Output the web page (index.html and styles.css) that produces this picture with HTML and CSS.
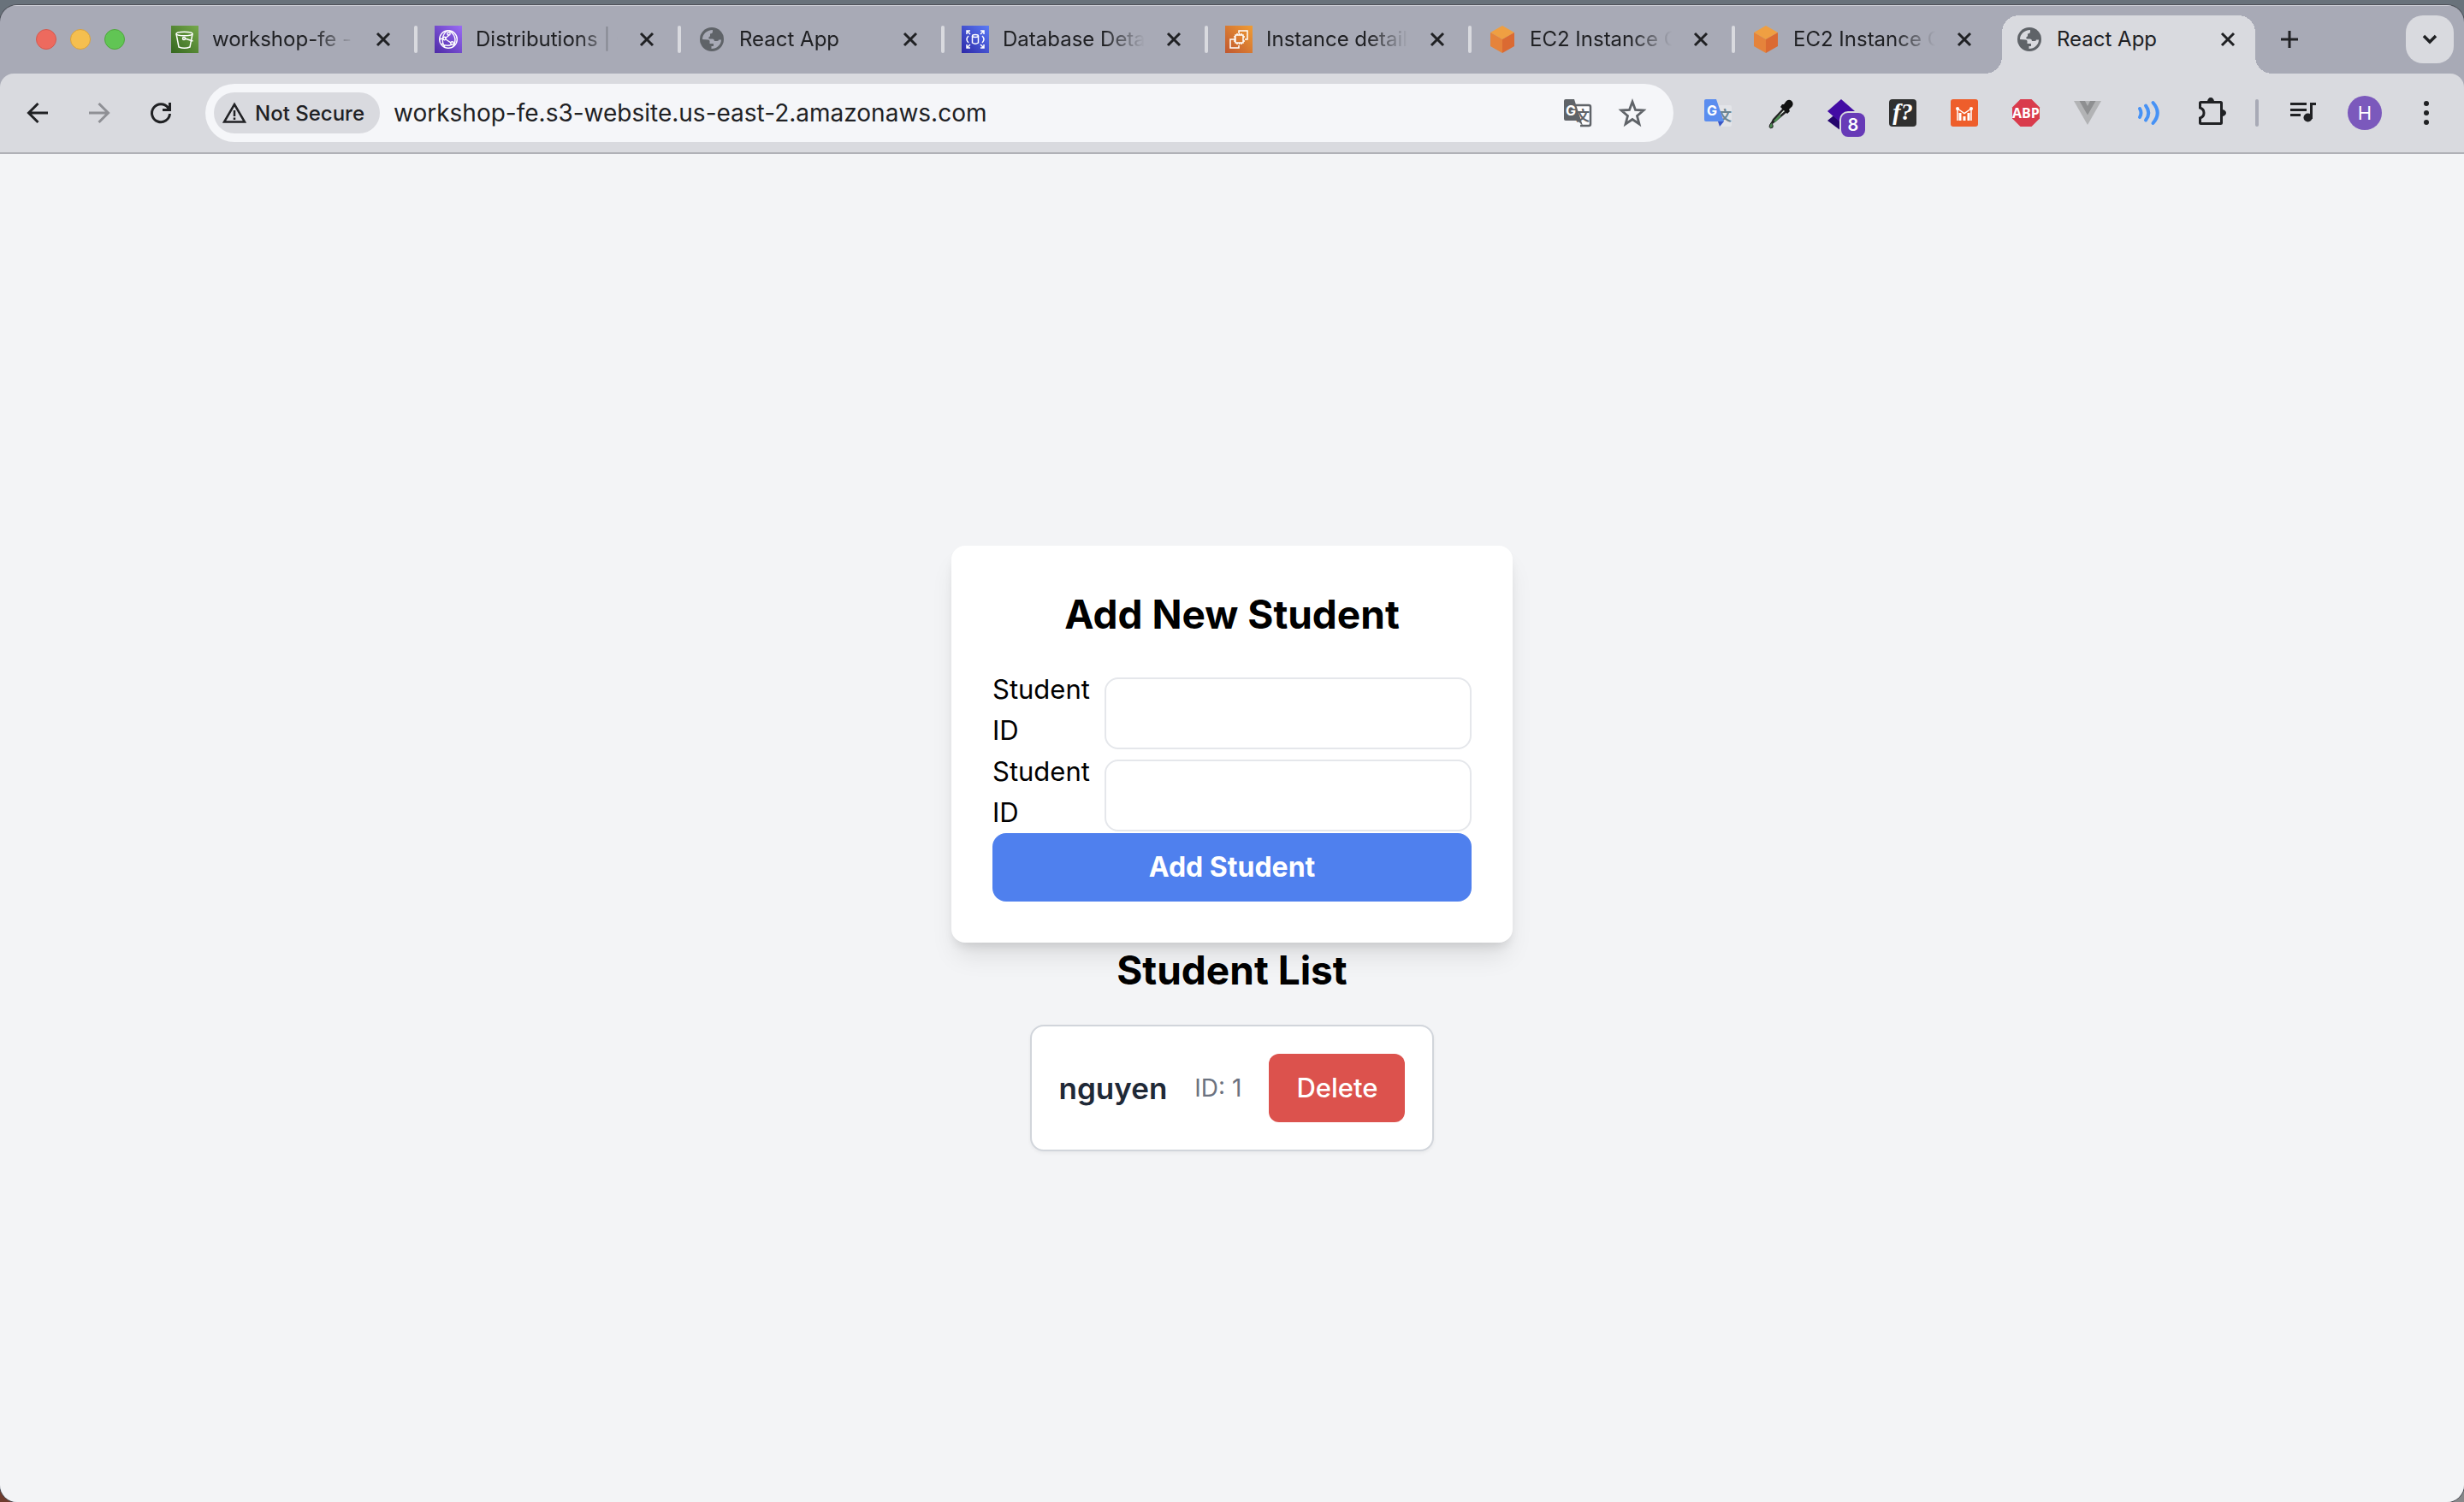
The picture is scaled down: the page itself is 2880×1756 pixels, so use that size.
FILE: index.html
```html
<!DOCTYPE html>
<html lang="en">
<head>
<meta charset="utf-8">
<meta name="viewport" content="width=device-width, initial-scale=1">
<title>React App</title>
<link rel="stylesheet" href="styles.css">
</head>
<body>
<svg class="defs" aria-hidden="true">
  <defs>
    <linearGradient id="green" x1="0" y1="1" x2="1" y2="0"><stop offset="0" stop-color="#35671f"/><stop offset="1" stop-color="#76a94b"/></linearGradient>
    <linearGradient id="violet" x1="0" y1="1" x2="1" y2="0"><stop offset="0" stop-color="#4d2aa6"/><stop offset="1" stop-color="#9b6cf5"/></linearGradient>
    <linearGradient id="blue" x1="0" y1="1" x2="1" y2="0"><stop offset="0" stop-color="#2d28a8"/><stop offset="1" stop-color="#5b7cf6"/></linearGradient>
    <linearGradient id="orange" x1="0" y1="1" x2="1" y2="0"><stop offset="0" stop-color="#c0572f"/><stop offset="1" stop-color="#f09d35"/></linearGradient>
    <symbol id="close" viewBox="0 0 24 24"><path d="M5 5 19 19M19 5 5 19" stroke="#202124" stroke-width="3" fill="none"/></symbol>
    <symbol id="globe" viewBox="0 0 32 32">
      <circle cx="16" cy="16" r="14" fill="#5f6368"/>
      <path fill="var(--land)" d="M5 16C5 10 10 5 17 5V7C17 8.500 16 9.500 14 9.500V12Q14 13 12.500 13V15.500H17Q19 15.500 19 18H22Q24 18 24 16.500H27C27 22 22 27 15.500 27V24H18V21H13.500V18Q13.500 16.500 11.500 16.500Z"/>
    </symbol>
    <symbol id="cube" viewBox="0 0 32 32">
      <path fill="#ef9f42" d="M16 0 30 8 16 16 2 8Z"/><path fill="#e5833b" d="M2 8 16 16V32L2 24Z"/><path fill="#db6a32" d="M30 8 16 16V32L30 24Z"/>
    </symbol>
  </defs>
</svg>
<div class="window">
  <header class="tabstrip">
    <div class="lights">
      <button class="light red" aria-label="Close window"></button>
      <button class="light yellow" aria-label="Minimize window"></button>
      <button class="light green" aria-label="Zoom window"></button>
    </div>
    <nav class="tabs" aria-label="Tabs">
      <div class="tab">
        <svg class="favicon" viewBox="0 0 32 32"><path fill="url(#green)" d="M0 0H32V32H0Z"/><g fill="none" stroke="#fff" stroke-width="1.500"><ellipse cx="15.500" cy="9.500" rx="9.500" ry="2.300"/><path d="M6 9.500 9 25Q15.500 27.500 22 25L25 9.500M16 15 25.500 18"/><circle cx="15" cy="15" r="1.500"/></g></svg>
        <a class="title" href="#">workshop-fe -</a>
        <button class="close" aria-label="Close tab"><svg><use href="#close"/></svg></button>
      </div>
      <div class="tab">
        <svg class="favicon" viewBox="0 0 32 32"><path fill="url(#violet)" d="M0 0H32V32H0Z"/><g fill="none" stroke="#fff" stroke-width="1.400"><circle cx="16" cy="16" r="10.300"/><path d="M15 6C8 10 8 20 12 25M17 6C25 11 25 18 22 24M6 16Q8 15 10 15M12 15 16 12V10M13 16 19 20M8 21Q14 25 20 22"/><circle cx="11.500" cy="15" r="1.700"/><circle cx="16.500" cy="9.500" r="1.700"/><circle cx="20.500" cy="20.500" r="1.700"/></g></svg>
        <a class="title" href="#">Distributions | C</a>
        <button class="close" aria-label="Close tab"><svg><use href="#close"/></svg></button>
      </div>
      <div class="tab">
        <svg class="favicon"><use href="#globe"/></svg>
        <a class="title" href="#">React App</a>
        <button class="close" aria-label="Close tab"><svg><use href="#close"/></svg></button>
      </div>
      <div class="tab">
        <svg class="favicon" viewBox="0 0 32 32"><path fill="url(#blue)" d="M0 0H32V32H0Z"/><g fill="none" stroke="#fff" stroke-width="1.500"><path d="M6 10V6H10M6 6 10 10M22 6H26V10M26 6 22 10M6 22V26H10M6 26 10 22M22 26H26V22M26 26 22 22M8 12Q4 16 8 20M24 12Q28 16 24 20M12.500 12V20Q16 22.500 19.500 20V12"/><ellipse cx="16" cy="12" rx="3.500" ry="1.500"/></g></svg>
        <a class="title" href="#">Database Deta</a>
        <button class="close" aria-label="Close tab"><svg><use href="#close"/></svg></button>
      </div>
      <div class="tab">
        <svg class="favicon" viewBox="0 0 32 32"><path fill="url(#orange)" d="M0 0H32V32H0Z"/><g fill="none" stroke="#fff" stroke-width="1.500"><path d="M16 9V6H26V16H23M12 16H6V26H16V23M12 11H21V20H12Z"/><path d="M14 9V11M16.500 9V11M19 9V11M14 20V22M16.500 20V22M19 20V22M10 13H12M10 15.500H12M10 18H12M21 13H23M21 18H23"/></g></svg>
        <a class="title" href="#">Instance detail</a>
        <button class="close" aria-label="Close tab"><svg><use href="#close"/></svg></button>
      </div>
      <div class="tab">
        <svg class="favicon"><use href="#cube"/></svg>
        <a class="title" href="#">EC2 Instance C</a>
        <button class="close" aria-label="Close tab"><svg><use href="#close"/></svg></button>
      </div>
      <div class="tab last">
        <svg class="favicon"><use href="#cube"/></svg>
        <a class="title" href="#">EC2 Instance C</a>
        <button class="close" aria-label="Close tab"><svg><use href="#close"/></svg></button>
      </div>
      <div class="tab active">
        <svg class="favicon"><use href="#globe"/></svg>
        <a class="title" href="#" aria-current="page">React App</a>
        <button class="close" aria-label="Close tab"><svg><use href="#close"/></svg></button>
      </div>
    </nav>
    <button class="newtab" aria-label="New tab"><svg viewBox="0 0 24 24"><path d="M12 2V22M2 12H22" stroke="#202124" stroke-width="3"/></svg></button>
    <button class="search-tabs" aria-label="Search tabs"><svg viewBox="0 0 24 24"><path d="M5 8 12 15 19 8" fill="none" stroke="#202124" stroke-width="3.500"/></svg></button>
  </header>

  <div class="toolbar">
    <button class="tool" aria-label="Back"><svg viewBox="0 0 32 32"><path d="M28 16H6M16.500 5 5.500 16 16.500 27" fill="none" stroke="#202124" stroke-width="3"/></svg></button>
    <button class="tool" aria-label="Forward"><svg viewBox="0 0 32 32"><path d="M4 16H26M15.500 5 26.500 16 15.500 27" fill="none" stroke="#8f9095" stroke-width="3"/></svg></button>
    <button class="tool" aria-label="Reload"><svg viewBox="0 0 32 32"><path d="M26.500 17A10.500 10.500 0 1 1 24.500 10L26.500 12.500M26.500 4V12.500H18" fill="none" stroke="#202124" stroke-width="3"/></svg></button>
    <div class="omnibox">
      <button class="chip"><svg viewBox="0 0 28 28"><path d="M14 4 26 24.500H2Z" fill="none" stroke="#202124" stroke-width="2.500"/><path d="M14 11V18M14 19.500V22" stroke="#202124" stroke-width="2.500"/></svg>Not Secure</button>
      <input class="url" type="text" aria-label="Address" value="workshop-fe.s3-website.us-east-2.amazonaws.com">
      <button class="inner" aria-label="Translate this page"><svg viewBox="0 0 40 40"><path fill="#fdfdfe" stroke="#5f6368" stroke-width="2.500" d="M18 11H33Q35 11 35 13V33Q35 35 33 35H23"/><path fill="#5f6368" d="M6 4H16L26 35 20 29H6Q4 29 4 27V6Q4 4 6 4Z"/><text class="glyph g" x="12" y="23">G</text><text class="glyph zh" x="26" y="29">文</text></svg></button>
      <button class="inner" aria-label="Bookmark this tab"><svg viewBox="0 0 40 40"><path d="M20 7 23.500 16.500 33 17 25.500 23.500 28 33 20 27.500 12 33 14.500 23.500 7 17 16.500 16.500Z" fill="none" stroke="#5f6368" stroke-width="2.800"/></svg></button>
    </div>
    <div class="extensions">
      <button class="ext" aria-label="Google Translate"><svg viewBox="0 0 40 40"><path fill="#e3e4e8" d="M18 11H34Q36 11 36 13V34Q36 36 34 36H22Z"/><text class="glyph zh slate" x="28" y="29">文</text><path fill="#5b8def" d="M6 4H18L27 30H6Q4 30 4 28V6Q4 4 6 4Z"/><path fill="#3a57c5" d="M20 30H27L22 36Z"/><text class="glyph g" x="13" y="23">G</text></svg></button>
      <button class="ext" aria-label="Color picker"><svg viewBox="0 0 40 40"><path d="M25 15 13 28 11 32 15 29 28 18" fill="#e4efe4" stroke="#222" stroke-width="2.500"/><path d="M21 23 14 30" stroke="#4b8a50" stroke-width="2.500"/><path fill="#111" d="M25 10 28 6Q32 3 35 7 37 11 33 14L31 16 32 18 29 21 21 13 23 10Z"/><path fill="#4b8a50" stroke="#222" d="M10.500 31Q13 35 12 37 9.500 39 8 36.500 8 34 10.500 31Z"/></svg></button>
      <button class="ext" aria-label="Layers, 8 notifications"><svg viewBox="0 0 40 40"><path fill="#24056d" d="M4 29 20 16V41Z"/><path fill="#430ca4" d="M20 4 36 18 20 32 4 18Z"/></svg><span class="badge">8</span></button>
      <button class="ext" aria-label="Fonts"><svg viewBox="0 0 40 40"><rect x="4" y="4" width="32" height="32" rx="4" fill="#303030"/><text class="glyph fn" x="20" y="28">f?</text></svg></button>
      <button class="ext" aria-label="Metrics"><svg viewBox="0 0 40 40"><rect x="4" y="4" width="32" height="32" rx="3" fill="#ee5e2b"/><path d="M12 14V29M28 14V29M12 15 20 20.500 28 15" fill="none" stroke="#fff" stroke-width="1.500"/><path d="M15 20V29M20 24V29M25 20V29" stroke="#fff" stroke-width="3"/><circle cx="12" cy="15" r="2" fill="#fff"/><circle cx="28" cy="15" r="2" fill="#fff"/></svg></button>
      <button class="ext" aria-label="Adblock Plus"><svg viewBox="0 0 40 40"><path fill="#d93b4c" d="M13.500 4H26.500L36 13.500V26.500L26.500 36H13.500L4 26.500V13.500Z"/><text class="glyph abp" x="20" y="26">ABP</text></svg></button>
      <button class="ext" aria-label="Vue devtools"><svg viewBox="0 0 40 40"><path fill="#b2b3b5" d="M4 6H36L20 34Z"/><path fill="#8e8f91" d="M10.500 6H17L20 12 23 6H29.500L20 22.500Z"/></svg></button>
      <button class="ext" aria-label="Read aloud"><svg viewBox="0 0 40 40"><g fill="none" stroke="#4792f5" stroke-width="4" stroke-linecap="round"><path d="M9 15Q12 20 9 25M16 11.500Q22.500 20 16 28.500M24.500 8Q35 20 24.500 32"/></g></svg></button>
      <button class="ext" aria-label="Extensions"><svg viewBox="0 0 40 40"><path d="M8.500 7.500H31.500Q32.500 7.500 32.500 8.500V31.500Q32.500 32.500 31.500 32.500H8.500Q7.500 32.500 7.500 31.500V26C13.500 24 13.500 16 7.500 14V8.500Q7.500 7.500 8.500 7.500Z" fill="none" stroke="#202124" stroke-width="3"/><path fill="#202124" d="M16 7A4 5 0 0 1 24 7ZM33 16A5 4 0 0 1 33 24Z"/></svg></button>
    </div>
    <span class="divider"></span>
    <button class="ext" aria-label="Media controls"><svg viewBox="0 0 40 40"><path d="M5 9.500H24M5 16.500H24M5 22.500H17M29.500 27V9.500H35" fill="none" stroke="#202124" stroke-width="3"/><circle cx="25.500" cy="25.500" r="5" fill="#202124"/></svg></button>
    <button class="ext" aria-label="Profile"><span class="avatar">H</span></button>
    <button class="ext" aria-label="Menu"><svg viewBox="0 0 40 40"><g fill="#202124"><circle cx="20" cy="9" r="3"/><circle cx="20" cy="20" r="3"/><circle cx="20" cy="31" r="3"/></g></svg></button>
  </div>

  <main class="page">
    <form class="card">
      <h1 class="heading">Add New Student</h1>
      <div class="field"><label for="student-id">Student ID</label><input id="student-id" type="text"></div>
      <div class="field"><label for="student-name">Student ID</label><input id="student-name" type="text"></div>
      <button class="add" type="button">Add Student</button>
    </form>
    <section class="list">
      <h2 class="heading">Student List</h2>
      <div class="student">
        <span class="name">nguyen</span>
        <span class="id">ID: 1</span>
        <button class="delete">Delete</button>
      </div>
    </section>
  </main>
</div>
</body>
</html>
```
FILE: styles.css
```css
* { box-sizing: border-box; }

body {
  --land: #a8aab6;
  margin: 0;
  min-height: 100vh;
  padding-top: 6px;
  display: flex;
  flex-direction: column;
  font-family: Inter, "Liberation Sans", sans-serif;
  color: #202124;
  background: linear-gradient(90deg, #6e3c2e, #88888a) bottom / 100% 40px no-repeat #69727b;
}

button, input {
  font: inherit;
  color: inherit;
  margin: 0;
  padding: 0;
  border: 0;
  background: none;
}

svg { display: block; }
.defs { position: absolute; width: 0; height: 0; }

.window {
  flex: 1;
  display: flex;
  flex-direction: column;
  border-radius: 20px;
  overflow: hidden;
  background: #a8aab6;
  box-shadow: 0 0 0 1px #4d5058;
}

/* Tab strip */
.tabstrip {
  display: flex;
  align-items: center;
  height: 80px;
  padding-right: 12px;
  box-shadow: inset 0 1px #d5d5dd;
}
.lights {
  display: flex;
  flex: none;
  gap: 16px;
  width: 180px;
  padding-left: 42px;
}
.light { width: 24px; height: 24px; border-radius: 50%; }
.red { background: #ed6a5e; border: 1px solid #d35a50; }
.yellow { background: #f5bf4f; border: 1px solid #d8a13d; }
.green { background: #61c554; border: 1px solid #4fa73d; }

.tabs { display: flex; align-self: stretch; }
.tab {
  position: relative;
  display: flex;
  align-items: center;
  width: 308px;
  padding-left: 20px;
}
.tab::after {
  content: "";
  width: 4px;
  height: 32px;
  margin-left: auto;
  border-radius: 2px;
  background: #d9dadf;
}
.favicon { flex: none; width: 32px; height: 32px; }
.title {
  width: 176px;
  margin-left: 16px;
  white-space: nowrap;
  font-size: 24px;
  line-height: 32px;
  color: inherit;
  text-decoration: none;
  mask-image: linear-gradient(90deg, #000 118px, transparent 166px);
}
.close { width: 24px; height: 24px; margin-left: 12px; }
.close svg { width: 24px; height: 24px; }
.last::after, .active::after { visibility: hidden; }
.active { isolation: isolate; --land: #d9dadf; }
.active .title { mask-image: none; }
.active::before {
  content: "";
  position: absolute;
  z-index: -1;
  inset: 12px -16px 0 -16px;
  background:
    radial-gradient(circle at 0 0, transparent 20px, #d9dadf 20px) left bottom / 20px 20px no-repeat,
    radial-gradient(circle at 100% 0, transparent 20px, #d9dadf 20px) right 4px bottom / 20px 20px no-repeat,
    linear-gradient(#d9dadf, #d9dadf) 20px 20px / calc(100% - 44px) 100% no-repeat,
    linear-gradient(#d9dadf, #d9dadf) 40px 0 / calc(100% - 84px) 20px no-repeat,
    radial-gradient(circle at 100% 100%, #d9dadf 20px, transparent 20px) 20px 0 / 20px 20px no-repeat,
    radial-gradient(circle at 0 100%, #d9dadf 20px, transparent 20px) right 24px top / 20px 20px no-repeat;
}
.newtab { flex: none; width: 24px; height: 24px; margin-left: 20px; }
.search-tabs {
  display: grid;
  place-items: center;
  width: 56px;
  height: 56px;
  margin-left: auto;
  border-radius: 20px;
  background: #d9dadf;
}
.search-tabs svg { width: 24px; height: 24px; }

/* Toolbar */
.toolbar {
  display: flex;
  align-items: center;
  height: 94px;
  padding: 0 8px;
  border-bottom: 2px solid #b0b1b7;
  border-radius: 16px 16px 0 0;
  background: #d9dadf;
}
.tool, .ext {
  position: relative;
  display: grid;
  flex: none;
  place-items: center;
  width: 72px;
  height: 72px;
}
.tool svg { width: 32px; height: 32px; }
.ext svg, .inner svg { width: 40px; height: 40px; }
.omnibox {
  display: flex;
  flex: 1;
  align-items: center;
  height: 68px;
  margin: 0 16px;
  padding: 0 16px 0 10px;
  border-radius: 34px;
  background: #f5f6f9;
}
.chip {
  display: flex;
  flex: none;
  align-items: center;
  gap: 10px;
  width: 194px;
  height: 48px;
  padding-left: 10px;
  border-radius: 24px;
  background: #d9dadf;
  font-size: 24px;
  font-weight: 500;
  white-space: nowrap;
}
.chip svg { flex: none; width: 28px; height: 28px; }
.url {
  flex: 1;
  min-width: 0;
  height: 48px;
  margin-left: 16px;
  font-size: 28px;
}
.inner { display: grid; place-items: center; width: 64px; height: 64px; }
.extensions { display: flex; }
.divider {
  width: 4px;
  height: 32px;
  margin: 0 16px;
  border-radius: 2px;
  background: #a8aab6;
}
.glyph { fill: #fff; text-anchor: middle; font-family: Inter, sans-serif; font-weight: 700; }
.g { font-size: 16px; }
.zh { fill: #5f6368; font-family: "Noto Sans CJK SC", sans-serif; font-size: 16px; }
.slate { fill: #6d8592; }
.fn { font-family: "Liberation Serif", serif; font-size: 28px; font-style: italic; }
.abp { font-family: "Open Sans", sans-serif; font-size: 16px; }
.badge {
  position: absolute;
  right: 8px;
  bottom: 8px;
  width: 28px;
  height: 28px;
  border-radius: 8px;
  background: #673ab7;
  box-shadow: 0 0 0 2px #d9dadf;
  color: #fff;
  font-size: 20px;
  font-weight: 600;
  line-height: 28px;
  text-align: center;
}
.avatar {
  width: 40px;
  height: 40px;
  border-radius: 50%;
  background: #7b59bc;
  color: #fff;
  font-size: 22px;
  line-height: 40px;
  text-align: center;
}

/* Page */
.page {
  flex: 1;
  display: flex;
  flex-direction: column;
  align-items: center;
  justify-content: center;
  padding-top: 48px;
  color: #000;
  background: #f3f4f6;
  font-size: 31px;
  line-height: 48px;
}
.card {
  width: 656px;
  padding: 48px;
  border-radius: 16px;
  background: #fff;
  box-shadow: 0 20px 30px -6px rgba(0, 0, 0, .1), 0 8px 12px -4px rgba(0, 0, 0, .1);
}
.heading {
  margin: 0 0 32px;
  font-size: 46px;
  line-height: 64px;
  font-weight: 700;
  text-align: center;
}
.field { display: flex; align-items: center; gap: 16px; }
.field label { flex: none; width: 115px; }
.field input {
  flex: 1;
  min-width: 0;
  height: 84px;
  margin-top: 8px;
  padding: 0 16px;
  border: 2px solid #e5e7eb;
  border-radius: 16px;
}
.add {
  width: 100%;
  height: 80px;
  border-radius: 16px;
  background: #4f80ee;
  color: #fff;
  font-size: 32px;
  font-weight: 700;
}
.list { position: relative; }
.student {
  display: flex;
  align-items: center;
  gap: 32px;
  padding: 32px;
  border: 2px solid #d1d5db;
  border-radius: 16px;
  background: #fff;
  box-shadow: 0 2px 4px rgba(0, 0, 0, .05);
}
.name { font-size: 35px; font-weight: 600; color: #1f2937; }
.id { font-size: 28px; color: #6b7280; }
.delete {
  height: 80px;
  padding: 0 32px;
  border-radius: 12px;
  background: #dc524d;
  color: #fff;
  font-weight: 500;
}
```
